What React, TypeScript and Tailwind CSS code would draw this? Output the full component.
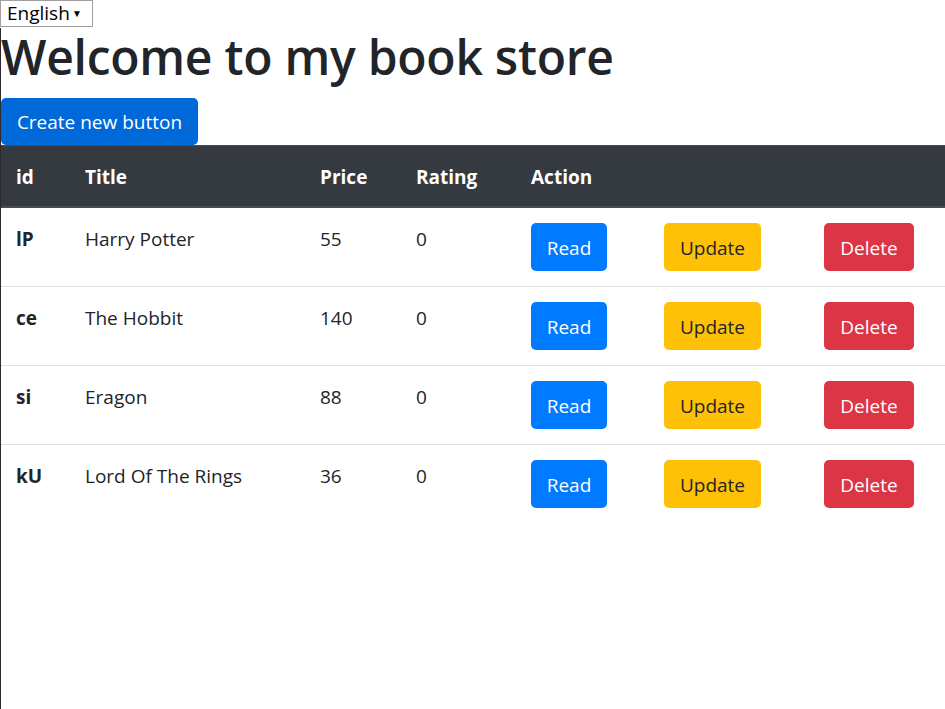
import React from "react";

const rows = [
  { id: "lP", title: "Harry Potter", price: "55", rating: "0" },
  { id: "ce", title: "The Hobbit", price: "140", rating: "0" },
  { id: "si", title: "Eragon", price: "88", rating: "0" },
  { id: "kU", title: "Lord Of The Rings", price: "36", rating: "0" },
];

const font = { fontFamily: '"Open Sans", "Noto Sans", sans-serif' };

export default function App() {
  return (
    <div className="w-[945px] h-[709px] bg-white text-[#212529] flex flex-col overflow-hidden" style={font}>
      <div className="h-[28px] flex items-start">
        <div className="h-[27px] w-[93px] border border-[#a0a0a0] flex items-center justify-between pl-[6px] pr-[10px] text-[19px] text-black leading-none">
          <span>English</span>
          <span className="text-[10px] pb-[2px]">▼</span>
        </div>
      </div>
      <div className="flex-1 border-l border-[#2b2b2b] flex flex-col">
        <h1 className="text-[48px] leading-[57px] font-semibold mb-[13px] tracking-[-0.25px] text-[#212529]">
          Welcome to my book store
        </h1>
        <div>
          <button className="h-[47px] w-[197px] pt-[2px] bg-[#0069d9] text-white text-[19px] rounded-[5px] flex items-center justify-center">
            Create new button
          </button>
        </div>
        <table className="w-[944px] border-collapse table-fixed text-[19px]">
          <colgroup>
            <col className="w-[69px]" />
            <col className="w-[235px]" />
            <col className="w-[96px]" />
            <col className="w-[115px]" />
            <col className="w-[133px]" />
            <col className="w-[160px]" />
            <col className="w-[136px]" />
          </colgroup>
          <thead>
            <tr className="bg-[#343a40] text-white font-bold h-[61px] border-t border-[#454d55] border-b-2 border-b-[#454d55]">
              <th className="text-left pl-[15px] pr-[14px] pt-[2px] align-middle font-bold">id</th>
              <th className="text-left pl-[15px] pr-[14px] pt-[2px] align-middle font-bold">Title</th>
              <th className="text-left pl-[15px] pr-[14px] pt-[2px] align-middle font-bold">Price</th>
              <th className="text-left pl-[15px] pr-[14px] pt-[2px] align-middle font-bold">Rating</th>
              <th className="text-left pl-[15px] pr-[14px] pt-[2px] align-middle font-bold">Action</th>
              <th></th>
              <th></th>
            </tr>
          </thead>
          <tbody>
            {rows.map((r, i) => (
              <tr key={r.id} className={i === 0 ? "" : "border-t border-[#dee2e6]"}>
                <td className="align-top pl-[15px] pr-[14px] pt-[17px] pb-[15px] font-bold leading-[29px]">{r.id}</td>
                <td className="align-top pl-[15px] pr-[14px] pt-[17px] leading-[29px]">{r.title}</td>
                <td className="align-top pl-[15px] pr-[14px] pt-[17px] leading-[29px]">{r.price}</td>
                <td className="align-top pl-[15px] pr-[14px] pt-[17px] leading-[29px]">{r.rating}</td>
                <td className="align-top pl-[15px] pr-[14px] pt-[15px] pb-[15px]">
                  <button className="h-[48px] w-[76px] pt-[3px] bg-[#007bff] text-white rounded-[5px] flex items-center justify-center">Read</button>
                </td>
                <td className="align-top pl-[15px] pr-[14px] pt-[15px] pb-[15px]">
                  <button className="h-[48px] w-[97px] pt-[3px] bg-[#ffc107] text-[#212529] rounded-[5px] flex items-center justify-center">Update</button>
                </td>
                <td className="align-top pl-[15px] pr-[14px] pt-[15px] pb-[15px]">
                  <button className="h-[48px] w-[90px] pt-[3px] bg-[#dc3545] text-white rounded-[5px] flex items-center justify-center">Delete</button>
                </td>
              </tr>
            ))}
          </tbody>
        </table>
      </div>
    </div>
  );
}
